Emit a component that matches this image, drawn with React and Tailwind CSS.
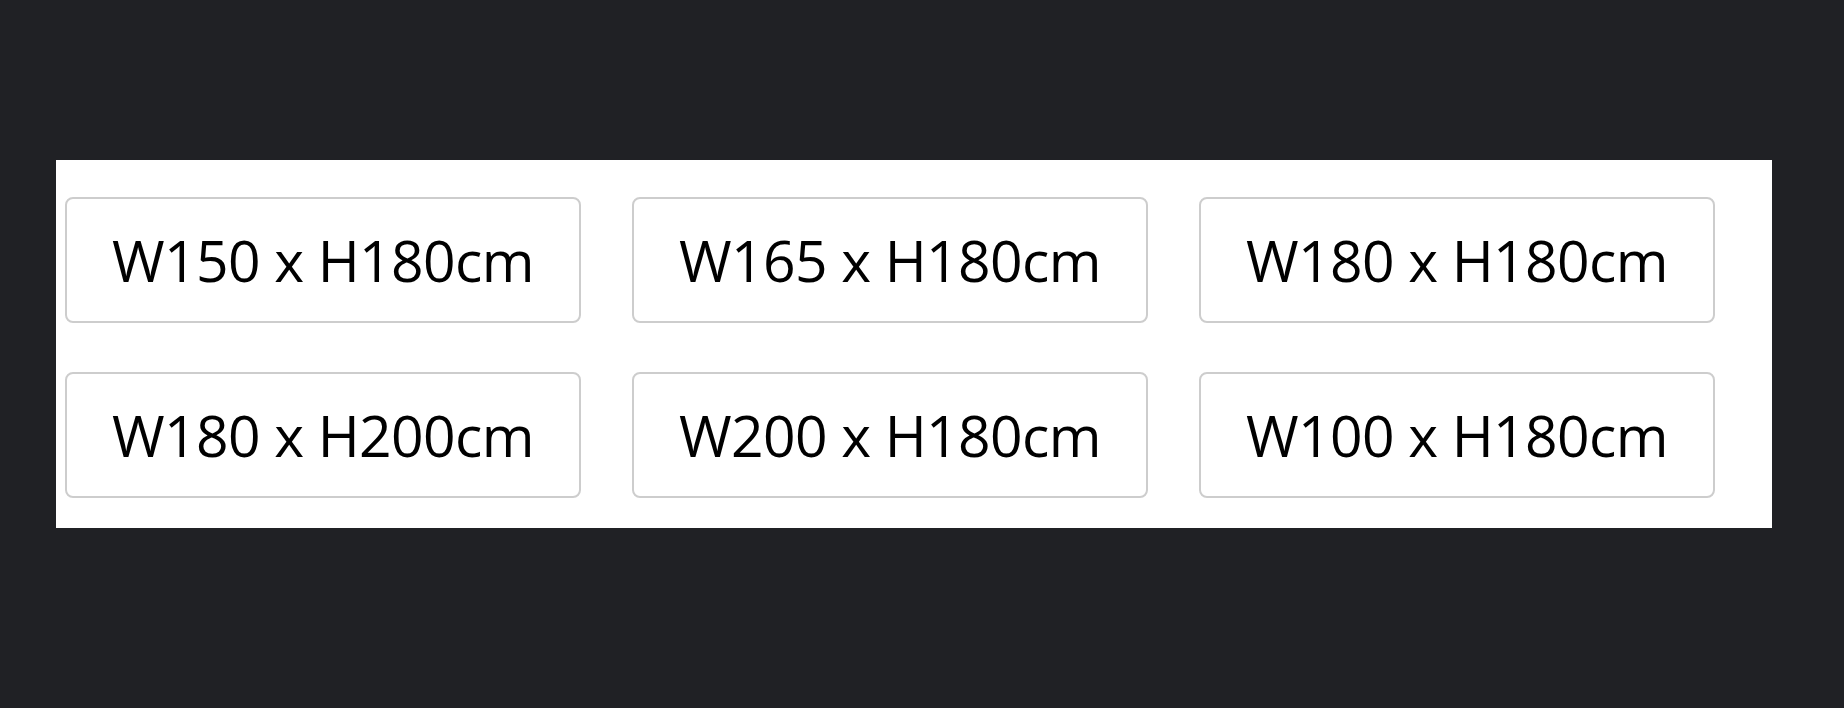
import React from 'react'

const sizes = [
  'W150 x H180cm',
  'W165 x H180cm',
  'W180 x H180cm',
  'W180 x H200cm',
  'W200 x H180cm',
  'W100 x H180cm',
]

function SizeOption({ label }) {
  return (
    <button className="w-[516px] h-[126px] flex items-center justify-center rounded-[8px] border-2 border-[#cdcdcd] bg-white text-[57px] tracking-[-0.6px] text-black leading-none">
      {label}
    </button>
  )
}

export default function App() {
  return (
    <div className="min-h-screen w-full bg-[#202125] pt-[160px] pl-[56px]" style={{ fontFamily: '"Open Sans", "Noto Sans", sans-serif' }}>
      <div className="w-[1716px] h-[368px] bg-white pl-[9px] pt-[37px]">
        {/* size picker grid */}
        <div className="grid grid-cols-[516px_516px_516px] gap-x-[51px] gap-y-[49px]">
          {sizes.map((s, i) => (
            <SizeOption key={i} label={s} />
          ))}
        </div>
      </div>
    </div>
  )
}
